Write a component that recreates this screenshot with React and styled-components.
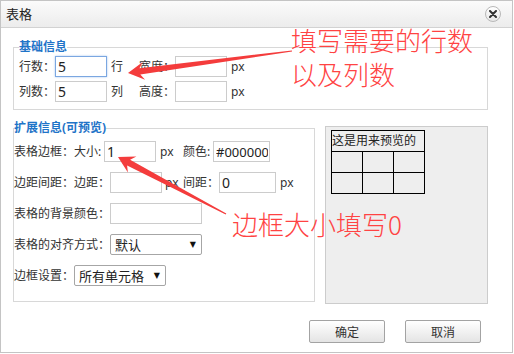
import React from 'react';
import styled, { createGlobalStyle } from 'styled-components';

const GlobalStyle = createGlobalStyle`
  html, body {
    margin: 0;
    padding: 0;
    background: #fff;
  }
  body {
    font-family: "Noto Sans", "Noto Sans CJK SC", sans-serif;
    color: #333;
  }
`;

const Dialog = styled.div`
  position: relative;
  box-sizing: border-box;
  width: 513px;
  height: 353px;
  border: 1px solid #c4c4c4;
  background: #fff;
`;

const TitleBar = styled.div`
  display: flex;
  align-items: center;
  justify-content: space-between;
  height: 26px;
  padding: 0 11px 0 5px;
  border-bottom: 1px solid #d2d2d2;
  background: linear-gradient(#fbfbfb, #ececec);
`;

const Title = styled.span`
  font-size: 13px;
  line-height: 16px;
  color: #222;
`;

const Close = styled.button`
  display: flex;
  align-items: center;
  justify-content: center;
  width: 16px;
  height: 16px;
  padding: 0;
  border: 1px solid #b8b8b8;
  border-radius: 50%;
  background: linear-gradient(#ffffff, #e8e8e8);
`;

const Body = styled.div`
  padding: 0 24px 0 12px;
`;

const Fieldset = styled.fieldset`
  box-sizing: border-box;
  width: ${p => p.$width}px;
  margin: ${p => p.$top}px 0 0 0;
  padding: 0 0 ${p => p.$bottom}px ${p => p.$left}px;
  border: 1px solid #d8d8d8;
  min-width: 0;
`;

const Legend = styled.legend`
  padding: 0;
  font-size: 12px;
  line-height: 16px;
  font-weight: bold;
  color: #1f74c8;
`;

const Row = styled.div`
  display: flex;
  align-items: center;
  height: 21px;
  margin-top: ${p => p.$top}px;
`;

const Label = styled.span`
  flex: none;
  width: ${p => p.$width}px;
  margin-left: ${p => p.$gap || 0}px;
  font-size: 12px;
  line-height: 16px;
  color: #333;
  white-space: nowrap;
`;

const Input = styled.input`
  flex: none;
  box-sizing: border-box;
  width: ${p => p.$width}px;
  height: 21px;
  margin: 0;
  padding: 0 1px 0 2px;
  border: 1px solid ${p => (p.$focused ? '#7ba7e1' : '#cccccc')};
  box-shadow: ${p => (p.$focused ? '0 0 2px #a9c8ef' : 'none')};
  border-radius: 0;
  font-family: "Noto Sans", sans-serif;
  font-size: ${p => (p.$small ? 13 : 14)}px;
  color: #222;
  outline: none;
`;

const Select = styled.div`
  flex: none;
  box-sizing: border-box;
  display: flex;
  align-items: center;
  justify-content: space-between;
  width: ${p => p.$width}px;
  height: 21px;
  padding: 0 5px 0 4px;
  border: 1px solid #a6a6a6;
  border-radius: 2px;
  background: #fff;
  font-size: 13px;
  line-height: 16px;
  color: #222;
`;

const Caret = styled.span`
  font-family: "DejaVu Sans", sans-serif;
  font-size: 8px;
  color: #111;
`;

const Lower = styled.div`
  display: flex;
  align-items: flex-start;
  margin-top: 10px;
`;

const Preview = styled.div`
  box-sizing: border-box;
  width: 163px;
  height: 178px;
  margin: 6px 0 0 10px;
  padding: 3px 5px;
  border: 1px solid #cccccc;
  background: #eeeeee;
`;

const PreviewTable = styled.table`
  width: 94px;
  border-collapse: collapse;
  table-layout: fixed;
  td {
    height: 20px;
    padding: 0;
    border: 1px solid #000;
    font-size: 12px;
    line-height: 16px;
    color: #222;
    white-space: nowrap;
    overflow: hidden;
  }
`;

const Buttons = styled.div`
  display: flex;
  justify-content: flex-end;
  gap: 20px;
  margin: 16px 7px 0 0;
`;

const Button = styled.button`
  width: 76px;
  height: 23px;
  padding: 0;
  border: 1px solid #a3a3a3;
  border-radius: 2px;
  background: linear-gradient(#ffffff, #e4e4e4);
  font-family: "Noto Sans CJK SC", sans-serif;
  font-size: 12px;
  color: #333;
`;

const Note = styled.div`
  position: absolute;
  left: ${p => p.$x}px;
  top: ${p => p.$y}px;
  font-family: "Noto Sans CJK SC", sans-serif;
  font-weight: 300;
  font-size: 26px;
  line-height: 34px;
  color: #ff4343;
  white-space: nowrap;
  pointer-events: none;
`;

const Overlay = styled.svg`
  position: absolute;
  left: -1px;
  top: -1px;
  pointer-events: none;
`;

// tapered annotation arrow, thin at the tail, wide head at the tip
const arrowPoints = ([sx, sy], [tx, ty]) => {
  const len = Math.hypot(tx - sx, ty - sy);
  const ux = (tx - sx) / len;
  const uy = (ty - sy) / len;
  const nx = -uy;
  const ny = ux;
  const at = (d, w) => `${(tx - ux * d + nx * w).toFixed(1)},${(ty - uy * d + ny * w).toFixed(1)}`;
  return [
    `${(sx + nx * 0.6).toFixed(1)},${(sy + ny * 0.6).toFixed(1)}`,
    at(12, 3.2),
    at(16, 9),
    at(0, 0),
    at(16, -9),
    at(12, -3.2),
    `${(sx - nx * 0.6).toFixed(1)},${(sy - ny * 0.6).toFixed(1)}`,
  ].join(' ');
};

const App = () => (
  <>
    <GlobalStyle />
    <Dialog>
      <TitleBar>
        <Title>表格</Title>
        <Close aria-label="关闭">
          <svg width="8" height="8" viewBox="0 0 8 8">
            <path d="M1 1 L7 7 M7 1 L1 7" stroke="#333" strokeWidth="2" strokeLinecap="round" />
          </svg>
        </Close>
      </TitleBar>

      <Body>
        <Fieldset $width={475} $top={11} $left={5} $bottom={7}>
          <Legend>基础信息</Legend>
          <Row $top={1}>
            <Label $width={36}>行数：</Label>
            <Input $width={52} $focused defaultValue="5" />
            <Label $width={12} $gap={4}>行</Label>
            <Label $width={36} $gap={16}>宽度：</Label>
            <Input $width={52} defaultValue="" />
            <Label $width={20} $gap={4}>px</Label>
          </Row>
          <Row $top={4}>
            <Label $width={36}>列数：</Label>
            <Input $width={52} defaultValue="5" />
            <Label $width={12} $gap={4}>列</Label>
            <Label $width={36} $gap={16}>高度：</Label>
            <Input $width={52} defaultValue="" />
            <Label $width={20} $gap={4}>px</Label>
          </Row>
        </Fieldset>

        <Lower>
          <Fieldset $width={302} $top={0} $left={0} $bottom={15}>
            <Legend>扩展信息(可预览)</Legend>
            <Row $top={5}>
              <Label $width={60}>表格边框：</Label>
              <Label $width={30}>大小:</Label>
              <Input $width={52} defaultValue="1" />
              <Label $width={23} $gap={4}>px</Label>
              <Label $width={30}>颜色:</Label>
              <Input $width={57} $small defaultValue="#000000" />
            </Row>
            <Row $top={10}>
              <Label $width={96}>边距间距：边距：</Label>
              <Input $width={52} defaultValue="" />
              <Label $width={18} $gap={3}>px</Label>
              <Label $width={36}>间距：</Label>
              <Input $width={57} defaultValue="0" />
              <Label $width={20} $gap={4}>px</Label>
            </Row>
            <Row $top={10}>
              <Label $width={96}>表格的背景颜色：</Label>
              <Input $width={92} defaultValue="" />
            </Row>
            <Row $top={10}>
              <Label $width={96}>表格的对齐方式：</Label>
              <Select $width={92}>
                默认
                <Caret>▼</Caret>
              </Select>
            </Row>
            <Row $top={10}>
              <Label $width={60}>边框设置：</Label>
              <Select $width={92}>
                所有单元格
                <Caret>▼</Caret>
              </Select>
            </Row>
          </Fieldset>

          <Preview>
            <PreviewTable>
              <tbody>
                <tr>
                  <td colSpan={3}>这是用来预览的</td>
                </tr>
                <tr>
                  <td />
                  <td />
                  <td />
                </tr>
                <tr>
                  <td />
                  <td />
                  <td />
                </tr>
              </tbody>
            </PreviewTable>
          </Preview>
        </Lower>

        <Buttons>
          <Button>确定</Button>
          <Button>取消</Button>
        </Buttons>
      </Body>

      <Overlay width="514" height="354" viewBox="0 0 514 354">
        <polygon points={arrowPoints([292, 51], [128, 73])} fill="#f43c3c" />
        <polygon points={arrowPoints([226, 214], [118, 157])} fill="#f43c3c" />
      </Overlay>
      <Note $x={290} $y={22}>
        填写需要的行数
        <br />
        以及列数
      </Note>
      <Note $x={231} $y={206}>边框大小填写0</Note>
    </Dialog>
  </>
);

export default App;
